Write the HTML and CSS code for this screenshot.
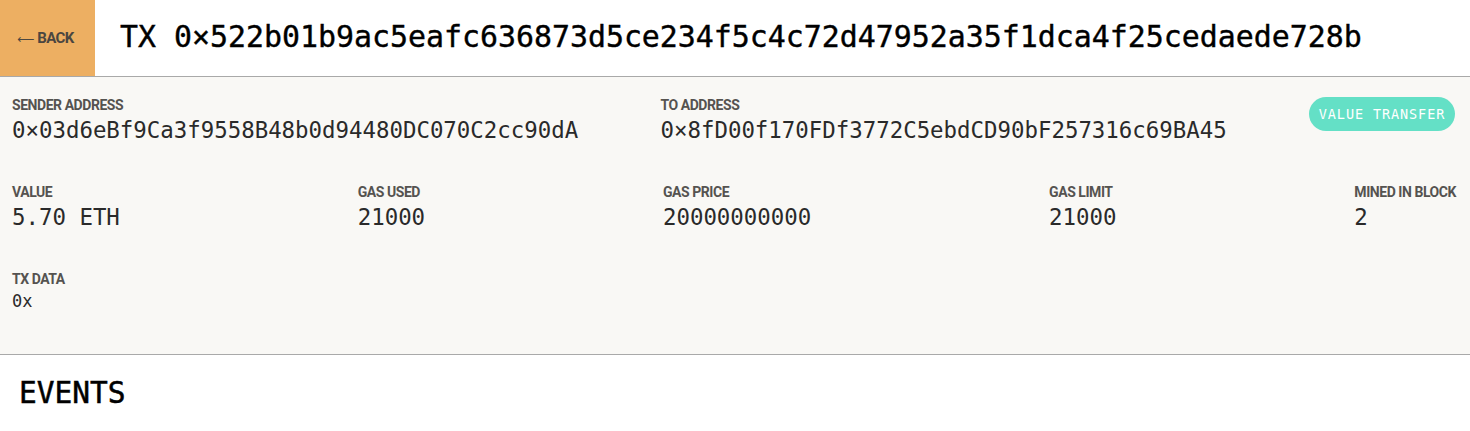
FILE: index.html
```html
<!DOCTYPE html>
<html>
<head>
<meta charset="utf-8">
<link rel="stylesheet" href="styles.css">
</head>
<body>
<header class="topbar">
  <button class="back"><span class="arrow">&#x27F5;</span>BACK</button>
  <h1 class="title">TX 0×522b01b9ac5eafc636873d5ce234f5c4c72d47952a35f1dca4f25cedaede728b</h1>
</header>
<section class="details">
  <div class="row row-addr">
    <div class="field">
      <div class="label">SENDER ADDRESS</div>
      <div class="value">0×03d6eBf9Ca3f9558B48b0d94480DC070C2cc90dA</div>
    </div>
    <div class="field">
      <div class="label">TO ADDRESS</div>
      <div class="value">0×8fD00f170FDf3772C5ebdCD90bF257316c69BA45</div>
    </div>
    <div class="badge">VALUE TRANSFER</div>
  </div>
  <div class="row">
    <div class="field">
      <div class="label">VALUE</div>
      <div class="value">5.70 ETH</div>
    </div>
    <div class="field">
      <div class="label">GAS USED</div>
      <div class="value">21000</div>
    </div>
    <div class="field">
      <div class="label">GAS PRICE</div>
      <div class="value">20000000000</div>
    </div>
    <div class="field">
      <div class="label">GAS LIMIT</div>
      <div class="value">21000</div>
    </div>
    <div class="field">
      <div class="label">MINED IN BLOCK</div>
      <div class="value">2</div>
    </div>
  </div>
  <div class="row">
    <div class="field">
      <div class="label">TX DATA</div>
      <div class="value small">0x</div>
    </div>
  </div>
</section>
<section class="events">
  <h2 class="events-title">EVENTS</h2>
</section>
</body>
</html>
```

FILE: styles.css
```css
* { box-sizing: border-box; }
html, body { margin: 0; padding: 0; background: #fff; }
body { font-family: "DejaVu Sans Mono", monospace; color: #111; }

.topbar {
  display: flex;
  align-items: center;
  height: 77px;
  border-bottom: 1px solid #a9a9a9;
  background: #fff;
}
.back {
  display: flex;
  align-items: center;
  justify-content: flex-start;
  width: 95px;
  height: 76px;
  border: none;
  margin: 0;
  padding: 0 0 0 17px;
  background: #edaf62;
  color: #4b4640;
  font-family: "Liberation Sans Narrow", "Roboto", sans-serif;
  font-weight: 700;
  font-size: 15px;
  letter-spacing: -0.6px;
}
.arrow {
  font-family: "DejaVu Sans", sans-serif;
  font-weight: normal;
  font-size: 12px;
  letter-spacing: 0;
  margin-right: 3px;
  margin-top: 1px;
}
.title {
  margin: 0 0 0 25px;
  padding-bottom: 4px;
  font-family: "DejaVu Sans Mono", monospace;
  font-weight: normal;
  font-size: 29.9px;
  color: #000;
  -webkit-text-stroke: 0.4px #000;
}

.details {
  background: #f9f8f5;
  padding: 20px 14px 0 12px;
  height: 278px;
  border-bottom: 1px solid #a9a9a9;
}
.row {
  display: flex;
  justify-content: space-between;
  align-items: flex-start;
  height: 87px;
}
.label {
  font-family: "Liberation Sans Narrow", "Roboto", sans-serif;
  font-weight: 700;
  font-size: 14px;
  line-height: 16px;
  color: #555350;
  letter-spacing: -0.45px;
}
.value {
  font-family: "DejaVu Sans Mono", monospace;
  font-size: 22.4px;
  line-height: 26px;
  margin-top: 4px;
  color: #2a2a2a;
}
.value.small {
  font-size: 17px;
  line-height: 22px;
  margin-top: 3px;
}
.badge {
  margin-top: 0;
  margin-right: 1px;
  width: 146px;
  height: 34px;
  border-radius: 17px;
  background: #64e0c6;
  color: #fff;
  font-family: "DejaVu Sans Mono", monospace;
  font-size: 13.5px;
  letter-spacing: 0.9px;
  display: flex;
  align-items: center;
  justify-content: center;
}

.events {
  padding: 21px 19px 0;
}
.events-title {
  margin: 0;
  font-family: "DejaVu Sans Mono", monospace;
  font-weight: normal;
  font-size: 29.5px;
  color: #000;
  -webkit-text-stroke: 0.5px #000;
}
```
